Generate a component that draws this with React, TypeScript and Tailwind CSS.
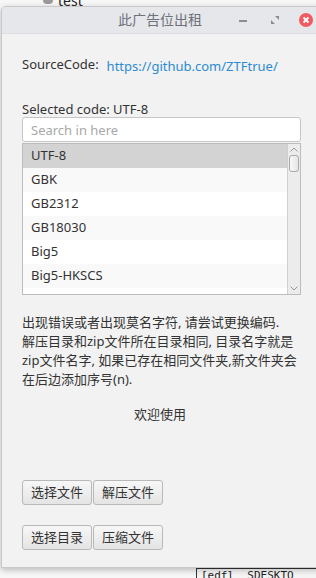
import React, { useState } from 'react';

const codes = ['UTF-8', 'GBK', 'GB2312', 'GB18030', 'Big5', 'Big5-HKSCS'];

const font = { fontFamily: '"Noto Sans", "Noto Sans CJK SC", sans-serif' };

const Btn: React.FC<{ label: string }> = ({ label }) => (
  <button className="h-[25px] px-[8px] rounded-[3px] border border-[#b8b8b8] bg-gradient-to-b from-[#f7f7f7] to-[#e4e4e4] text-[13px] leading-none text-[#333]">
    {label}
  </button>
);

const App: React.FC = () => {
  const [selected, setSelected] = useState(0);
  const [query, setQuery] = useState('');

  const shown = codes.filter((c) => c.toLowerCase().includes(query.toLowerCase()));

  return (
    <div className="relative w-[316px] h-[578px] overflow-hidden bg-[#f7f7f7]" style={font}>
      {/* desktop bits behind the window */}
      <div className="absolute left-[43px] top-[-4px] w-[10px] h-[8px] rounded-full bg-[#9a9a9a]" />
      <div className="absolute left-[58px] top-[-10px] text-[14px] text-[#222]">test</div>
      <div className="absolute left-[196px] top-[568px] w-[130px] h-[20px] border-l border-t border-[#333] bg-[#f4f4f4] pl-[4px] text-[11px] leading-[14px] text-[#222]" style={{ fontFamily: '"DejaVu Sans Mono", monospace' }}>
        [edfl &nbsp;SDESKTO
      </div>

      {/* window */}
      <div className="absolute left-[1px] top-[6px] w-[330px] h-[562px] flex flex-col rounded-tl-[5px] border border-[#c9c9cc] bg-[#f2f2f2] shadow-[0_2px_6px_rgba(0,0,0,0.25)] overflow-hidden">
        <div className="relative h-[27px] shrink-0 flex items-center justify-center bg-[#e6e7ea] border-b border-[#dcdde0] pr-[12px]">
          <span className="text-[14px] text-[#6d717a] mb-[1px]">此广告位出租</span>
          <div className="absolute left-[237px] top-[13px] w-[8px] h-[2px] bg-[#8a8d95]" />
          <svg className="absolute left-[269px] top-[9px]" width="8" height="8" viewBox="0 0 8 8">
            <path d="M0 8 L0 4 L4 8 Z M8 0 L8 4 L4 0 Z" fill="#8a8d95" />
          </svg>
          <div className="absolute left-[297px] top-[6px] w-[14px] h-[14px] rounded-full bg-[#ef5b61] flex items-center justify-center">
            <svg width="8" height="8" viewBox="0 0 8 8">
              <path d="M1.5 1.5 L6.5 6.5 M6.5 1.5 L1.5 6.5" stroke="#fff" strokeWidth="1.8" />
            </svg>
          </div>
        </div>

        <div className="flex flex-col pl-[20px] w-[300px] text-[13px] text-[#333]">
          <div className="flex items-start gap-[8px] mt-[21px]">
            <span className="leading-[18px]">SourceCode:</span>
            <a className="mt-[2px] leading-[18px] text-[#2b8bd2]" href="#">https://github.com/ZTFtrue/</a>
          </div>

          <div className="mt-[25px] leading-[18px]">Selected code: {codes[selected]}</div>

          <input
            className="mt-[-1px] h-[25px] w-[279px] rounded-[3px] border border-[#c6c6c6] bg-white px-[8px] text-[13px] text-[#333] placeholder-[#a8a8a8] outline-none"
            placeholder="Search in here"
            value={query}
            onChange={(e) => setQuery(e.target.value)}
          />

          <div className="mt-[1px] flex w-[279px] h-[152px] border border-[#bcbcbc] bg-white overflow-hidden">
            <div className="flex-1 flex flex-col">
              {shown.map((c, i) => (
                <div
                  key={c}
                  onClick={() => setSelected(codes.indexOf(c))}
                  className={
                    'h-[24px] shrink-0 flex items-center pl-[8px] ' +
                    (codes.indexOf(c) === selected ? 'bg-[#d3d3d3]' : i % 2 === 1 ? 'bg-[#f9f9f9]' : 'bg-white')
                  }
                >
                  {c}
                </div>
              ))}
            </div>
            <div className="w-[13px] flex flex-col items-center border-l border-[#d0d0d0] bg-[#ececec]">
              <svg className="mt-[3px]" width="8" height="5" viewBox="0 0 8 5">
                <path d="M0.5 4.5 L4 1 L7.5 4.5" stroke="#999" fill="none" />
              </svg>
              <div className="mt-[3px] w-[10px] h-[17px] rounded-[3px] border border-[#a9a9a9] bg-gradient-to-r from-[#f8f8f8] to-[#e6e6e6]" />
              <div className="flex-1" />
              <svg className="mb-[3px]" width="8" height="5" viewBox="0 0 8 5">
                <path d="M0.5 0.5 L4 4 L7.5 0.5" stroke="#999" fill="none" />
              </svg>
            </div>
          </div>

          <div className="mt-[18px] leading-[19px]">
            <div>出现错误或者出现莫名字符, 请尝试更换编码.</div>
            <div>解压目录和zip文件所在目录相同, 目录名字就是</div>
            <div>zip文件名字, 如果已存在相同文件夹,新文件夹会</div>
            <div>在后边添加序号(n).</div>
          </div>

          <div className="mt-[16px] text-center pr-[4px] leading-[19px]">欢迎使用</div>

          <div className="mt-[56px] flex gap-[1px]">
            <Btn label="选择文件" />
            <Btn label="解压文件" />
          </div>
          <div className="mt-[20px] flex gap-[1px]">
            <Btn label="选择目录" />
            <Btn label="压缩文件" />
          </div>
        </div>
      </div>
    </div>
  );
};

export default App;
